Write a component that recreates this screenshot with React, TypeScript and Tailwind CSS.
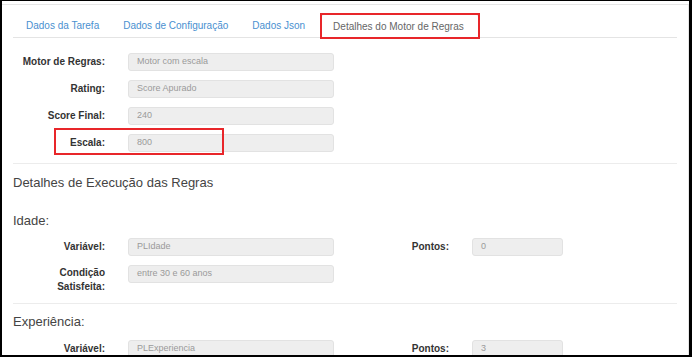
import React from "react";

const font = { fontFamily: '"Liberation Sans", Arial, Helvetica, sans-serif' };

function Field({ value, w = "w-[206px]" }: { value: string; w?: string }) {
  return (
    <div
      className={`${w} h-[18px] shrink-0 rounded-[3px] border border-[#e2e2e2] bg-[#eeeeee] pl-[8px] flex items-center text-[9px] text-[#9a9a9a]`}
    >
      {value}
    </div>
  );
}

function Label({ children, w = "w-[92px]" }: { children: React.ReactNode; w?: string }) {
  return (
    <div className={`${w} shrink-0 text-right text-[10px] font-bold text-[#333] leading-[14px]`}>
      {children}
    </div>
  );
}

export default function App() {
  const tabs = ["Dados da Tarefa", "Dados de Configuração", "Dados Json"];
  return (
    <div
      style={font}
      className="w-[692px] h-[357px] overflow-hidden bg-white border-l-2 border-t border-r-[3px] border-b-2 border-black"
    >
      <div className="h-full mt-[3px] border-t border-r border-[#e6e6e6] px-[11px]">
        {/* Tabs */}
        <div className="mt-[9px] flex border-b border-[#e4e4e4]">
          {tabs.map((t, i) => (
            <div
              key={t}
              className={`h-[23px] px-[11px] mr-[2px] flex items-center text-[10px] text-[#4a90d0] ${i === 0 ? "ml-[2px]" : ""}`}
            >
              {t}
            </div>
          ))}
          <div className="relative h-[24px] -mb-px pl-[11px] pr-[14px] ml-[3px] flex items-center text-[10px] text-[#666] bg-white border border-b-0 border-[#e4e4e4] rounded-t-[3px]">
            Detalhes do Motor de Regras
            <span className="absolute -left-[2px] -top-[2px] -right-[2px] -bottom-[1px] border-2 border-[#e8262a]" />
          </div>
        </div>

        {/* Main fields */}
        <div className="mt-[15px] flex flex-col gap-[9px]">
          <div className="flex items-center gap-[23px]">
            <Label>Motor de Regras:</Label>
            <Field value="Motor com escala" />
          </div>
          <div className="flex items-center gap-[23px]">
            <Label>Rating:</Label>
            <Field value="Score Apurado" />
          </div>
          <div className="flex items-center gap-[23px]">
            <Label>Score Final:</Label>
            <Field value="240" />
          </div>
          <div className="relative flex items-center gap-[23px]">
            <Label>Escala:</Label>
            <Field value="800" />
            <span className="absolute left-[41px] top-[-6px] w-[170px] h-[27px] border-2 border-[#e8262a]" />
          </div>
        </div>

        <div className="mt-[11px] h-px bg-[#ececec]" />

        <div className="mt-[11px] text-[13px] leading-[16px] text-[#444]">
          Detalhes de Execução das Regras
        </div>

        <div className="mt-[22px] text-[13px] leading-[16px] text-[#444]">Idade:</div>

        <div className="mt-[9px] flex flex-col gap-[9px]">
          <div className="flex items-center gap-[23px]">
            <Label>Variável:</Label>
            <Field value="PLIdade" />
            <Label w="w-[92px]">Pontos:</Label>
            <Field value="0" w="w-[91px]" />
          </div>
          <div className="flex items-start gap-[23px]">
            <Label>
              <div className="pt-px">Condição</div>
              <div>Satisfeita:</div>
            </Label>
            <Field value="entre 30 e 60 anos" />
          </div>
        </div>

        <div className="mt-[9px] h-px bg-[#ececec]" />

        <div className="mt-[10px] text-[13px] leading-[16px] text-[#444]">Experiência:</div>

        <div className="mt-[10px] flex items-center gap-[23px]">
          <Label>Variável:</Label>
          <Field value="PLExperiencia" />
          <Label w="w-[92px]">Pontos:</Label>
          <Field value="3" w="w-[91px]" />
        </div>
      </div>
    </div>
  );
}
